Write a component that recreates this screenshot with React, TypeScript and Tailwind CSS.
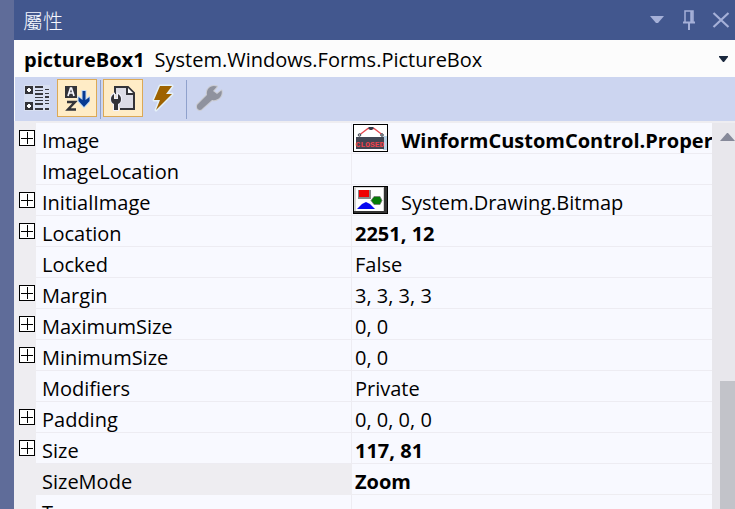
import React from "react";

type Property = {
  name: string;
  value: string;
  expandable?: boolean;
  bold?: boolean;
  selected?: boolean;
  preview?: "closed" | "shapes";
};

const properties: Property[] = [
  { name: "Image", value: "WinformCustomControl.Properties", expandable: true, bold: true, preview: "closed" },
  { name: "ImageLocation", value: "" },
  { name: "InitialImage", value: "System.Drawing.Bitmap", expandable: true, preview: "shapes" },
  { name: "Location", value: "2251, 12", expandable: true, bold: true },
  { name: "Locked", value: "False" },
  { name: "Margin", value: "3, 3, 3, 3", expandable: true },
  { name: "MaximumSize", value: "0, 0", expandable: true },
  { name: "MinimumSize", value: "0, 0", expandable: true },
  { name: "Modifiers", value: "Private" },
  { name: "Padding", value: "0, 0, 0, 0", expandable: true },
  { name: "Size", value: "117, 81", expandable: true, bold: true },
  { name: "SizeMode", value: "Zoom", bold: true, selected: true },
  { name: "Tag", value: "" },
];

function ClosedPreview() {
  return (
    <svg width="35" height="28" viewBox="0 0 35 28" aria-hidden="true" className="shrink-0">
      <rect x=".5" y=".5" width="34" height="27" fill="#fff" stroke="#000" />
      <path d="M7 10.500 15 4.500h6l8 6" fill="none" stroke="#e5484f" strokeWidth="1.300" />
      <path d="M15.500 3h5v1.500l-1.500 1.500h-2l-1.500-1.500z" fill="#343a49" />
      <circle cx="6.500" cy="11" r="1.300" fill="#bbb" stroke="#444b58" />
      <circle cx="29" cy="11" r="1.300" fill="#bbb" stroke="#444b58" />
      <rect x="30" y="12" width="4" height="14" fill="#b9d2e6" />
      <rect x="3" y="13" width="28" height="12" fill="#414653" />
      <text
        x="17"
        y="23"
        textAnchor="middle"
        fill="#f0434b"
        className="font-['Liberation_Mono',monospace] text-[8px] font-bold"
      >
        CLOSED
      </text>
    </svg>
  );
}

function ShapesPreview() {
  return (
    <svg width="35" height="28" viewBox="0 0 35 28" aria-hidden="true" className="shrink-0">
      <rect width="35" height="28" fill="#000" />
      <rect x="1" y="1" width="33" height="26" fill="#d5d5d5" />
      <rect x="3" y="2" width="27" height="23" fill="#fff" />
      <path d="M31 1h3v26H1v-2h30z" fill="#333" />
      <rect x="5" y="4" width="13" height="9" fill="#888" />
      <rect x="6" y="4" width="10" height="7" fill="#f00000" />
      <path d="m18 14.500 3-4h6l2 4-2 4h-6z" fill="#087b08" stroke="#777" strokeWidth=".8" />
      <path d="M4 23 9 18l4-2 4 2 5 5z" fill="#0808f0" />
    </svg>
  );
}

function CategorizedIcon() {
  return (
    <svg width="26" height="26" viewBox="0 0 26 26" aria-hidden="true" shapeRendering="crispEdges">
      <path d="M0 0h26v26H0z" fill="#d8dff1" />
      <path d="M1 1h8v8H1zM1 17h8v8H1z" fill="#333338" />
      <path d="M3 5h4M5 3v4M3 21h4M5 19v4" stroke="#fff" strokeWidth="2" />
      <path
        d="M11 1h8v2h-8zM11 5h8v1h-8zM11 8h8v2h-8zM11 12h8v1h-8zM11 15h8v1h-8zM11 18h8v2h-8zM11 23h8v2h-8zM21 4h4v1h-4zM21 8h4v1h-4zM21 11h4v2h-4zM21 15h4v1h-4zM21 18h4v1h-4zM21 23h4v2h-4z"
        fill="#38383d"
      />
    </svg>
  );
}

function SortIcon() {
  return (
    <svg width="26" height="27" viewBox="0 0 26 27" aria-hidden="true">
      <path d="M1 1h12v12H1z" fill="#333338" />
      <path d="M4 11 6.500 3h1L10 11M5 8h4" fill="none" stroke="#f7f7ff" strokeWidth="1.700" />
      <path d="M3 17h8L4 24.500h8" fill="none" stroke="#333338" strokeWidth="2.500" />
      <path
        d="M18.500 6h3v9l4-3v4L20 22l-5.500-6v-4l4 3z"
        fill="#063a92"
        stroke="#c3dcf4"
        strokeWidth="2"
        paintOrder="stroke"
      />
    </svg>
  );
}

function PropertiesIcon() {
  return (
    <svg width="26" height="27" viewBox="0 0 26 27" aria-hidden="true">
      <path d="M5 9V2h13l6 6v16H10" fill="#dcdce6" stroke="#333338" strokeWidth="2" />
      <path d="M17 2v7h7" fill="#fff" stroke="#333338" strokeWidth="2" />
      <path
        d="M4 9v5h4V9c2 1 3 3 3 5 0 3-1 4-3 5v6H4v-6c-2-1-3-2-3-5 0-2 1-4 3-5z"
        fill="#333338"
        stroke="#f1f1fb"
        strokeWidth="2"
        paintOrder="stroke"
      />
    </svg>
  );
}

function EventsIcon() {
  return (
    <svg width="24" height="28" viewBox="0 0 24 28" aria-hidden="true">
      <path
        d="M9 2h12l-6 8h6L5 26l4-10H3z"
        fill="#9e6200"
        stroke="#e5f1f7"
        strokeWidth="3"
        strokeLinejoin="round"
        paintOrder="stroke"
      />
    </svg>
  );
}

function WrenchIcon() {
  return (
    <svg width="28" height="28" viewBox="0 0 28 28" aria-hidden="true">
      <path
        d="M21 2.500c-6-2-11 2-10 8.500l-9 9c-2 2-1 6 2 6 1 0 2-1 3-2l9-8c6 1 11-4 9.500-9.500L21 10l-4-3z"
        fill="#8f929e"
        stroke="#cacbd1"
        strokeWidth="2"
        strokeLinejoin="round"
        paintOrder="stroke"
      />
    </svg>
  );
}

function ToolButton({ label, active = false, children }: { label: string; active?: boolean; children: React.ReactNode }) {
  return (
    <button
      type="button"
      aria-label={label}
      aria-pressed={active}
      className={`flex h-[38px] w-10 shrink-0 items-center justify-center border ${
        active ? "border-[#dca956] bg-[#ffecc6]" : "border-transparent"
      }`}
    >
      {children}
    </button>
  );
}

function PropertyRow({ property }: { property: Property }) {
  const { name, value, expandable, bold, selected, preview } = property;
  const line = selected ? "border-[#eeedf1] bg-[#eeedf1]" : "border-[#edecf2]";
  return (
    <tr className="h-[31px]">
      <td className="bg-[#eeedf1] p-0 align-top">
        {expandable && (
          <button type="button" aria-label={`Expand ${name}`} className="ml-[5px] mt-[7px] block h-4 w-4">
            <svg width="16" height="16" viewBox="0 0 16 16" aria-hidden="true" shapeRendering="crispEdges">
              <rect x=".5" y=".5" width="15" height="15" fill="#fff" stroke="#000" />
              <path d="M2 8.500h12M8.500 2v12" stroke="#000" />
            </svg>
          </button>
        )}
      </td>
      <th scope="row" className={`border-b border-r p-0 pl-1.5 text-left align-top font-normal ${line}`}>
        <div className="h-[30px] pt-[5px] leading-[26px]">{name}</div>
      </th>
      <td className={`border-b p-0 align-top ${line} ${selected ? "bg-[#f8f9ff]" : ""}`}>
        <div
          className={`flex h-[30px] whitespace-nowrap ${preview ? "gap-[13px] pl-px pt-px" : "pl-[3px] pt-[5px]"} ${
            bold ? "font-bold" : ""
          }`}
        >
          {preview === "closed" && <ClosedPreview />}
          {preview === "shapes" && <ShapesPreview />}
          <span className={preview ? "min-w-0 overflow-hidden pt-1 leading-[26px]" : "leading-[26px]"}>{value}</span>
        </div>
      </td>
    </tr>
  );
}

export default function App() {
  return (
    <main className="flex h-screen overflow-hidden bg-[#5f6c99] pl-3.5 font-['Open_Sans','Noto_Sans_CJK_TC',sans-serif] text-[20px] text-black">
      <section className="flex min-w-0 flex-1 flex-col bg-[#fcfcfc]">
        <header className="flex h-10 shrink-0 items-center bg-[#42578e] pl-[9px] text-[#f5f7ff]">
          <h1 className="flex-1 pt-0.5 font-['Noto_Sans_CJK_TC',sans-serif] font-light leading-[26px]">屬性</h1>
          <div className="flex items-center gap-2 pr-0.5 text-[#a5b0d8]">
            <button type="button" aria-label="Window options" className="flex h-6 w-6 items-center justify-center">
              <svg width="14" height="8" viewBox="0 0 14 8" aria-hidden="true"><path d="M0 0h14L8 7H6z" fill="currentColor" /></svg>
            </button>
            <button type="button" aria-label="Auto hide" className="flex h-6 w-6 items-center justify-center">
              <svg width="14" height="20" viewBox="0 0 14 20" fill="none" stroke="currentColor" aria-hidden="true">
                <path d="M3 12V1h8v11" strokeWidth="1.500" />
                <path d="M9.500 1v11" strokeWidth="2.500" />
                <path d="M1 12.500h12M7 13v7" strokeWidth="2" />
              </svg>
            </button>
            <button type="button" aria-label="Close" className="flex h-6 w-6 items-center justify-center">
              <svg width="18" height="16" viewBox="0 0 18 16" aria-hidden="true"><path d="m1.500 1 15 14m0-14-15 14" stroke="currentColor" strokeWidth="2.200" /></svg>
            </button>
          </div>
        </header>

        <button type="button" aria-haspopup="listbox" className="flex h-[37px] shrink-0 items-center gap-2.5 whitespace-nowrap pl-2.5 pr-[7px] text-left">
          <span className="pt-0.5 font-bold">pictureBox1</span>
          <span className="min-w-0 flex-1 overflow-hidden pt-0.5">System.Windows.Forms.PictureBox</span>
          <svg width="9" height="6" viewBox="0 0 9 6" aria-hidden="true"><path d="M0 0h9v1L5 6H4L0 1z" fill="#1b293e" /></svg>
        </button>

        <div role="toolbar" aria-label="Property view" className="ml-px flex h-11 shrink-0 items-start bg-[#ccd5f0] pl-0.5 pt-0.5">
          <ToolButton label="Categorized"><CategorizedIcon /></ToolButton>
          <ToolButton label="Alphabetical" active><SortIcon /></ToolButton>
          <span className="mx-[3px] mt-px h-[39px] w-px shrink-0 bg-[#8fa1cc]" />
          <div className="-ml-px flex">
            <ToolButton label="Properties" active><PropertiesIcon /></ToolButton>
            <ToolButton label="Events"><EventsIcon /></ToolButton>
          </div>
          <span className="mx-[3px] mt-px h-[39px] w-px shrink-0 bg-[#8fa1cc]" />
          <ToolButton label="Property pages"><WrenchIcon /></ToolButton>
        </div>

        <div className="flex min-h-0 flex-1 border-t-2 border-[#eeedf1]">
          <div className="min-w-0 flex-1 overflow-hidden bg-[#f8f9ff]">
            <table className="w-full table-fixed border-separate border-spacing-0" aria-label="Properties of pictureBox1">
              <colgroup>
                <col className="w-[22px]" />
                <col className="w-[316px]" />
                <col />
              </colgroup>
              <tbody>
                {properties.map((property) => (
                  <PropertyRow key={property.name} property={property} />
                ))}
              </tbody>
            </table>
          </div>
          <div className="flex w-[23px] shrink-0 flex-col bg-[#e8e7ec] pl-2">
            <button type="button" aria-label="Scroll up" className="pt-2.5">
              <svg width="15" height="8" viewBox="0 0 15 8" aria-hidden="true"><path d="m0 8 7-8h1l7 8z" fill="#868999" /></svg>
            </button>
            <div className="mt-60 flex-1 bg-[#c2c3c9]" />
          </div>
        </div>
      </section>
    </main>
  );
}
